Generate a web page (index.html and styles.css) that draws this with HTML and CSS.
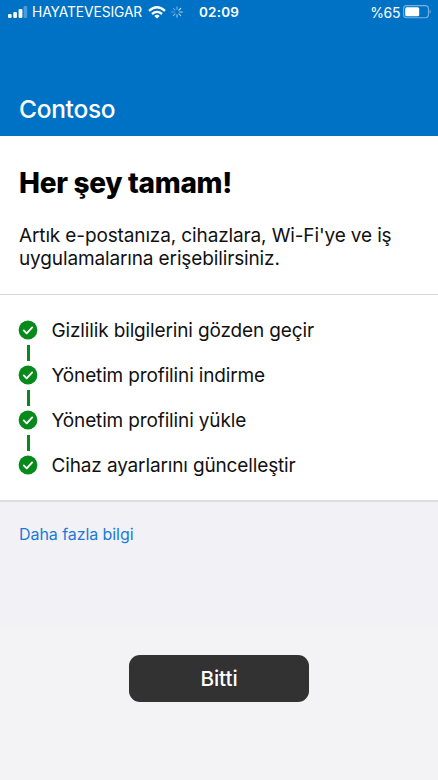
FILE: index.html
```html
<!DOCTYPE html>
<html lang="tr">
<head>
<meta charset="utf-8">
<meta name="viewport" content="width=device-width, initial-scale=1">
<title>Contoso</title>
<link rel="stylesheet" href="styles.css">
</head>
<body>
<header class="header">
  <div class="status">
    <div class="status-left">
      <svg class="signal" width="20" height="12" viewBox="0 0 20 12" fill="#fff"><rect x="0" y="8" width="3.6" height="4" rx="1"/><rect x="5.3" y="6" width="3.6" height="6" rx="1"/><rect x="10.6" y="3" width="3.8" height="9" rx="1"/><rect x="15.6" y="0" width="3.6" height="12" rx="1" opacity=".3"/></svg>
      <span class="carrier">HAYATEVESIGAR</span>
      <svg class="wifi" width="18" height="13" viewBox="0 0 18 13" fill="none" stroke="#fff" stroke-width="2.3"><path d="M1 4.8Q9-2.3 17 4.8"/><path d="M4 8Q9 3.8 14 8"/><path d="M9 12.6L6.3 9.9Q9 7.8 11.7 9.9Z" fill="#fff" stroke="none"/></svg>
      <svg class="spinner" width="12" height="12" viewBox="0 0 12 12" stroke="#fff" stroke-width="1.1" stroke-linecap="round"><path d="M6 .7V3.3" opacity=".45"/><path d="M9.7 2.3L7.9 4.1" opacity=".8"/><path d="M11.3 6H8.7" opacity=".7"/><path d="M9.7 9.7L7.9 7.9" opacity=".65"/><path d="M6 11.3V8.7" opacity=".6"/><path d="M2.3 9.7L4.1 7.9" opacity=".5"/><path d="M.7 6H3.3" opacity=".4"/><path d="M2.3 2.3L4.1 4.1" opacity=".35"/></svg>
    </div>
    <span class="time">02:09</span>
    <div class="status-right">
      <span class="percent">%65</span>
      <svg class="battery" width="29" height="14" viewBox="0 0 29 14" fill="none"><rect x=".6" y=".6" width="24.8" height="12.2" rx="3" stroke="#fff" stroke-opacity=".45" stroke-width="1.1"/><rect x="2.2" y="2.2" width="14" height="9" rx="1.5" fill="#fff"/><path d="M26.6 4.5Q29 6.7 26.6 8.9Z" fill="#fff" opacity=".45"/></svg>
    </div>
  </div>
  <div class="brand"><span>Contoso</span></div>
</header>
<section class="intro">
  <h1>Her şey tamam!</h1>
  <p>Artık e-postanıza, cihazlara, Wi-Fi'ye ve iş<br>uygulamalarına erişebilirsiniz.</p>
</section>
<ul class="steps">
  <li><svg class="check" width="20" height="20" viewBox="0 0 20 20"><circle cx="10" cy="10" r="9.4"/><path d="M5.8 10.4L8.7 13.3L14.2 7.4"/></svg><span>Gizlilik bilgilerini gözden geçir</span></li>
  <li><svg class="check" width="20" height="20" viewBox="0 0 20 20"><circle cx="10" cy="10" r="9.4"/><path d="M5.8 10.4L8.7 13.3L14.2 7.4"/></svg><span>Yönetim profilini indirme</span></li>
  <li><svg class="check" width="20" height="20" viewBox="0 0 20 20"><circle cx="10" cy="10" r="9.4"/><path d="M5.8 10.4L8.7 13.3L14.2 7.4"/></svg><span>Yönetim profilini yükle</span></li>
  <li><svg class="check" width="20" height="20" viewBox="0 0 20 20"><circle cx="10" cy="10" r="9.4"/><path d="M5.8 10.4L8.7 13.3L14.2 7.4"/></svg><span>Cihaz ayarlarını güncelleştir</span></li>
</ul>
<main class="more"><a>Daha fazla bilgi</a></main>
<footer class="footer"><button>Bitti</button></footer>
</body>
</html>
```
FILE: styles.css
```css
* { box-sizing: border-box; }
body {
  margin: 0;
  height: 780px;
  display: flex;
  flex-direction: column;
  overflow: hidden;
  background: #f2f1f6;
  color: #111;
  font-family: Inter, "Liberation Sans", sans-serif;
}
.header { height: 136px; background: #0072c6; color: #fff; display: flex; flex-direction: column; justify-content: space-between; }
.status { height: 24px; padding: 0 6px 0 8px; display: grid; grid-template-columns: 191px 1fr auto; align-items: center; font-size: 13.5px; white-space: nowrap; }
.status-left, .status-right { display: flex; align-items: center; }
.carrier { margin-left: 4px; width: 112px; font-size: 13.8px; letter-spacing: -0.1px; }
.wifi { margin-left: 4px; }
.spinner { margin-left: 5px; }
.time { font-weight: 600; letter-spacing: 0.2px; }
.percent { margin-right: 3px; font-size: 14px; letter-spacing: -0.4px; }
.brand { height: 55px; padding-left: 19px; font-size: 24.5px; line-height: 56px; font-weight: 500; letter-spacing: -0.3px; }
.intro { height: 159px; padding: 30px 0 0 19px; background: #fff; border-bottom: 1px solid #d8d8da; }
h1 { margin: 0; font-size: 28px; line-height: 34px; font-weight: 800; letter-spacing: -0.3px; color: #000; }
p { margin: 24px 0 0; font-size: 19px; line-height: 23px; letter-spacing: -0.13px; white-space: nowrap; }
.steps { height: 207px; margin: 0; padding: 12.5px 18px 0; list-style: none; background: #fff; border-bottom: 2px solid #dddde1; }
.steps li { position: relative; height: 45px; display: flex; align-items: center; gap: 13.5px; font-size: 19px; letter-spacing: -0.14px; white-space: nowrap; }
.steps li:not(:last-child)::after { content: ""; position: absolute; left: 8.5px; top: 37px; width: 3px; height: 16px; background: #078a1c; }
.check circle { fill: #078a1c; }
.check path { fill: none; stroke: #fff; stroke-width: 1.9; stroke-linecap: round; stroke-linejoin: round; }
.more { height: 126px; padding: 21px 19px; font-size: 16px; line-height: 22px; letter-spacing: -0.07px; color: #1a7bd7; }
.footer { flex: 1; padding-top: 27px; background: #f3f3f5; display: flex; justify-content: center; align-items: flex-start; }
button { width: 180px; height: 47px; padding: 0; border: 0; border-radius: 11px; background: #323232; color: #fff; font: 500 20.7px/47px Inter, sans-serif; letter-spacing: -0.1px; }
```
